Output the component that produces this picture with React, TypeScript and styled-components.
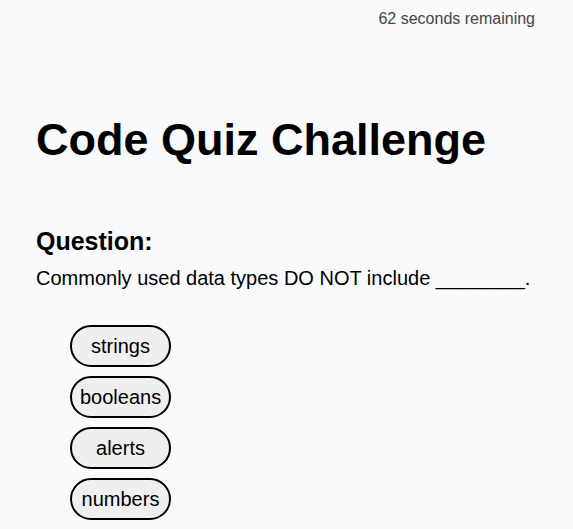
import React from "react";
import styled, { createGlobalStyle } from "styled-components";

const Global = createGlobalStyle`
  html, body { margin: 0; padding: 0; background: #f8fafc; }
  body { font-family: "Liberation Sans", Arial, sans-serif; color: #000; }
`;

const Page = styled.div`
  display: flex;
  flex-direction: column;
  padding: 0 36px;
`;

const Header = styled.header`
  display: flex;
  justify-content: flex-end;
  padding-top: 10px;
  padding-right: 2px;
`;

const Timer = styled.span`
  font-size: 16px;
  color: #444;
`;

const Title = styled.h1`
  font-size: 45px;
  font-weight: bold;
  margin: 86px 0 0;
`;

const Section = styled.section`
  margin-top: 61px;
`;

const QLabel = styled.h2`
  font-size: 25px;
  font-weight: bold;
  margin: 0;
`;

const QText = styled.p`
  font-size: 20px;
  margin: 11px 0 0;
`;

const Choices = styled.div`
  display: flex;
  flex-direction: column;
  align-items: flex-start;
  gap: 9px;
  margin-top: 35px;
  padding-left: 34px;
`;

const Choice = styled.button`
  font-family: "Liberation Sans", Arial, sans-serif;
  font-size: 20px;
  color: #000;
  background: #efefef;
  border: 2px solid #000;
  border-radius: 21px;
  height: 42px;
  padding: 0 8px;
  min-width: 101px;
  cursor: pointer;
`;

const choices = ["strings", "booleans", "alerts", "numbers"];

export default function App() {
  return (
    <>
      <Global />
      <Page>
        <Header>
          <Timer>62 seconds remaining</Timer>
        </Header>
        <Title>Code Quiz Challenge</Title>
        <Section>
          <QLabel>Question:</QLabel>
          <QText>Commonly used data types DO NOT include ________.</QText>
          <Choices>
            {choices.map((c) => (
              <Choice key={c}>{c}</Choice>
            ))}
          </Choices>
        </Section>
      </Page>
    </>
  );
}
